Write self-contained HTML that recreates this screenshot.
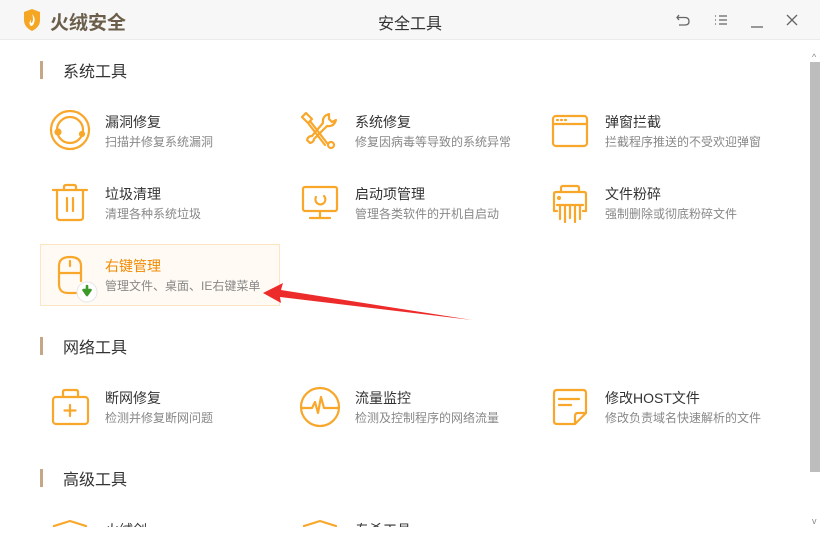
<!DOCTYPE html>
<html><head><meta charset="utf-8"><style>
*{margin:0;padding:0;box-sizing:border-box}
body{width:820px;height:540px;overflow:hidden;background:#fff;font-family:"Liberation Sans","Noto Sans CJK SC",sans-serif;position:relative}
.hdr{position:absolute;left:0;top:0;width:820px;height:40px;background:#f7f7f7;border-bottom:1px solid #ebebeb}
.abs{position:absolute}
.sec{position:absolute;left:40px;font-size:16px;color:#333;height:18px}
.sec:before{content:"";position:absolute;left:0;top:0;width:3px;height:18px;background:#c4a784}
.sec span{position:absolute;left:23px;top:-3px;white-space:nowrap}
.t{position:absolute;font-size:14px;color:#333;white-space:nowrap}
.s{position:absolute;font-size:12px;color:#888;white-space:nowrap}
svg.i{position:absolute;overflow:visible}
.i *{fill:none;stroke:#f9a72b;stroke-width:2.2;stroke-linecap:round;stroke-linejoin:round}
</style></head><body>
<div class="hdr"></div>
<svg class="abs" style="left:22px;top:9px" width="20" height="22" viewBox="0 0 20 22"><path d="M2 3 L10 0 L18 3 L18 11 Q18 18 10 22 Q2 18 2 11Z" fill="#f5a623"/><path d="M10 5 Q14 9 12 14 Q11 17 9 17 Q6 15 9 10 Q8 14 10 14 Q12 10 10 5Z" fill="#fff"/></svg>
<div class="abs" style="left:50px;top:8px;font-size:19px;font-weight:bold;color:#6b5e4b">火绒安全</div>
<div class="abs" style="left:378px;top:10px;font-size:16px;color:#333">安全工具</div>
<svg class="abs" style="left:676px;top:12px" width="130" height="16" viewBox="0 0 130 16" fill="none" stroke="#666" stroke-width="1.3"><path d="M3 3 L1 5.5 L3 8 M1 5.5 H9 Q13 5.5 13 9.5 Q13 13 9 13 H3"/><path d="M39 4h1 M39 8h1 M39 12h1 M43 4h8 M43 8h8 M43 12h8"/><path d="M75 15 H87"/><path d="M111 3 L121 13 M121 3 L111 13"/></svg>
<div class="abs" style="left:812px;top:52px;font-size:9px;color:#888">^</div>
<div class="abs" style="left:810px;top:62px;width:10px;height:410px;background:#bdbdbd"></div>
<div class="abs" style="left:812px;top:516px;font-size:9px;color:#888">v</div>

<div class="sec" style="top:61px"><span>系统工具</span></div>
<div class="sec" style="top:337px"><span>网络工具</span></div>
<div class="sec" style="top:469px"><span>高级工具</span></div>

<div class="abs" style="left:40px;top:244px;width:240px;height:62px;background:#fffaf3;border:1px solid #fde5c4"></div>

<!-- row1 -->
<svg class="i" style="left:50px;top:110px" width="40" height="40"><circle cx="20" cy="20" r="19"/><circle cx="20" cy="20" r="13"/><circle cx="8" cy="22" r="2.5" style="fill:#f9a72b"/><circle cx="32" cy="24" r="2" style="fill:#f9a72b"/></svg>
<div class="t" style="left:105px;top:112px">漏洞修复</div><div class="s" style="left:105px;top:133px">扫描并修复系统漏洞</div>
<svg class="i" style="left:300px;top:111px" width="40" height="40"><path d="M2 6 L6 2 L12 8 L8 12Z M10 10 L27 32 M8 12 L25 34"/><path d="M29 3 Q22 5 23 12 L12 25 Q8 25 7 29 L10 32 Q14 31 14 28 L27 15 Q34 16 36 9 L32 11 L29 8 Z"/><circle cx="31" cy="34" r="3"/></svg>
<div class="t" style="left:355px;top:112px">系统修复</div><div class="s" style="left:355px;top:133px">修复因病毒等导致的系统异常</div>
<svg class="i" style="left:552px;top:115px" width="36" height="32"><rect x="1" y="1" width="34" height="30" rx="3"/><path d="M1 9 H35 M5 5h1 M9 5h1 M13 5h1"/></svg>
<div class="t" style="left:605px;top:112px">弹窗拦截</div><div class="s" style="left:605px;top:133px">拦截程序推送的不受欢迎弹窗</div>

<!-- row2 -->
<svg class="i" style="left:52px;top:184px" width="36" height="38"><path d="M1 6 H35 M12 6 V3 Q12 1 14 1 H22 Q24 1 24 3 V6 M5 6 V33 Q5 36 8 36 H28 Q31 36 31 33 V6 M15 14 V27 M21 14 V27"/></svg>
<div class="t" style="left:105px;top:184px">垃圾清理</div><div class="s" style="left:105px;top:205px">清理各种系统垃圾</div>
<svg class="i" style="left:302px;top:186px" width="36" height="34"><rect x="1" y="1" width="34" height="24" rx="2"/><path d="M18 25 V32 M8 32 H28"/><path d="M22 10 A5 5 0 1 1 14 11"/></svg>
<div class="t" style="left:355px;top:184px">启动项管理</div><div class="s" style="left:355px;top:205px">管理各类软件的开机自启动</div>
<svg class="i" style="left:552px;top:185px" width="36" height="38"><path d="M9 7 V3 Q9 1 11 1 H25 Q27 1 27 3 V7 M5 26 H2 V9 Q2 7 4 7 H32 Q34 7 34 9 V26 H31 M8 20 V34 M13 20 V37 M18 20 V33 M23 20 V37 M28 20 V34 M5 20 H31"/><circle cx="7" cy="13" r="1" style="fill:#f9a72b"/></svg>
<div class="t" style="left:605px;top:184px">文件粉碎</div><div class="s" style="left:605px;top:205px">强制删除或彻底粉碎文件</div>

<!-- row3 -->
<svg class="i" style="left:56px;top:255px" width="44" height="46"><path d="M20 38 H12 Q3 38 3 29 V11 Q3 2 14 2 Q25 2 25 11 V26 M3 18 H25 M14 6 V11"/><circle cx="31" cy="37" r="10" style="fill:#fff;stroke:#e6e6e6;stroke-width:1"/><path d="M31 31 V38 M27.5 35 L31 40 L34.5 35 Z" style="stroke:#3c9a2a;stroke-width:2.6;fill:#3c9a2a"/></svg>
<div class="t" style="left:105px;top:256px;color:#f08a00">右键管理</div><div class="s" style="left:105px;top:277px">管理文件、桌面、IE右键菜单</div>

<svg class="abs" style="left:255px;top:280px" width="230" height="50"><path d="M8 13 L28 3 L26 10 L217 40 L25 17 L26 23 Z" fill="#ee2b2b"/></svg>

<!-- network -->
<svg class="i" style="left:52px;top:389px" width="38" height="36"><rect x="1" y="8" width="35" height="27" rx="3"/><path d="M11 8 V3 Q11 1 13 1 H24 Q26 1 26 3 V8 M18 16 V27 M12.5 21.5 H23.5"/></svg>
<div class="t" style="left:105px;top:388px">断网修复</div><div class="s" style="left:105px;top:409px">检测并修复断网问题</div>
<svg class="i" style="left:300px;top:387px" width="40" height="40"><circle cx="20" cy="20" r="19"/><path d="M1 21 H12 L15 15 L18 26 L21 10 L24 21 H39"/></svg>
<div class="t" style="left:355px;top:388px">流量监控</div><div class="s" style="left:355px;top:409px">检测及控制程序的网络流量</div>
<svg class="i" style="left:553px;top:389px" width="34" height="36"><path d="M22 35 H4 Q1 35 1 32 V4 Q1 1 4 1 H30 Q33 1 33 4 V24 Z M22 35 V27 Q22 24 25 24 H33 M6 10 H26 M6 16 H18"/></svg>
<div class="t" style="left:605px;top:388px">修改HOST文件</div><div class="s" style="left:605px;top:409px">修改负责域名快速解析的文件</div>

<!-- advanced clipped -->
<div class="abs" style="left:0;top:518px;width:800px;height:9px;overflow:hidden">
<svg class="i" style="left:53px;top:2px" width="34" height="20"><path d="M1 6 L17 1 L33 6 V20"/><path d="M1 6 V20"/></svg>
<div class="t" style="left:105px;top:2px">火绒剑</div>
<svg class="i" style="left:303px;top:2px" width="34" height="20"><path d="M1 6 L17 1 L33 6 V20 M1 6 V20"/></svg>
<div class="t" style="left:355px;top:2px">专杀工具</div>
</div>
</body></html>
